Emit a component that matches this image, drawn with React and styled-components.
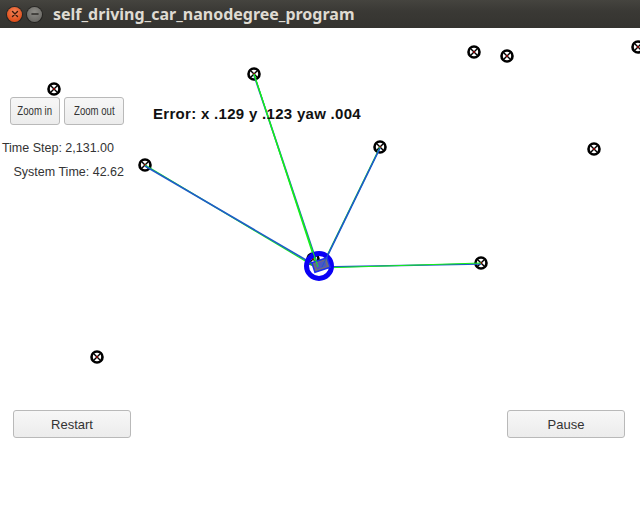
import React from 'react'
import styled, { createGlobalStyle } from 'styled-components'

const GlobalStyle = createGlobalStyle`
  html, body {
    margin: 0;
    padding: 0;
    background: #ffffff;
  }
  body {
    font-family: 'Liberation Sans', Arial, sans-serif;
  }
`

const Window = styled.div`
  width: 640px;
  height: 508px;
  display: flex;
  flex-direction: column;
  overflow: hidden;
`

const TitleBar = styled.div`
  height: 28px;
  flex: none;
  display: flex;
  align-items: center;
  padding-left: 7px;
  gap: 5px;
  background: linear-gradient(#45443f, #3a3935 40%, #34332f);
  box-sizing: border-box;
`

const WinButton = styled.span`
  width: 15px;
  height: 15px;
  border-radius: 50%;
  display: flex;
  align-items: center;
  justify-content: center;
  background: ${p => (p.$close
    ? 'radial-gradient(circle at 50% 35%, #f5855a, #e0501c 70%, #c9420f)'
    : 'radial-gradient(circle at 50% 35%, #8d8c87, #6d6c68 70%, #5c5b57)')};
  box-shadow: 0 0 0 1px rgba(0, 0, 0, 0.35);
  svg {
    display: block;
  }
`

const Title = styled.span`
  margin-left: 6px;
  color: #dfdbd2;
  font-family: 'Noto Sans', 'DejaVu Sans', sans-serif;
  font-weight: 700;
  font-size: 16px;
`

const Stage = styled.div`
  position: relative;
  flex: 1;
  background: #ffffff;
`

const Scene = styled.svg`
  position: absolute;
  inset: 0;
  width: 640px;
  height: 480px;
`

const Overlay = styled.div`
  position: absolute;
  inset: 0;
  display: flex;
  flex-direction: column;
  justify-content: space-between;
  padding: 69px 15px 70px 0;
  box-sizing: border-box;
  pointer-events: none;
  > * {
    pointer-events: auto;
  }
`

const TopRow = styled.div`
  display: flex;
  align-items: flex-start;
`

const LeftColumn = styled.div`
  width: 124px;
  display: flex;
  flex-direction: column;
  align-items: flex-end;
`

const ZoomRow = styled.div`
  display: flex;
  gap: 4px;
  margin-bottom: 11px;
`

const Button = styled.button`
  width: ${p => p.$w}px;
  height: ${p => p.$h}px;
  padding: 0;
  border: 1px solid #b9b9b9;
  border-radius: 3px;
  background: linear-gradient(#f7f7f7, #ececec);
  color: #333333;
  font-family: 'Liberation Sans', Arial, sans-serif;
  font-size: ${p => p.$fs}px;
  cursor: pointer;
`

const ZoomLabel = styled.span`
  display: inline-block;
  transform: scaleX(0.8);
`

const InfoLine = styled.div`
  font-size: 12.5px;
  line-height: 24px;
  color: #333333;
  white-space: nowrap;
  margin-right: ${p => p.$shift || 0}px;
`

const ErrorText = styled.div`
  margin: 8px 0 0 29px;
  font-size: 15px;
  line-height: 18px;
  font-weight: 700;
  letter-spacing: 0.3px;
  color: #111111;
  white-space: nowrap;
`

const BottomRow = styled.div`
  display: flex;
  justify-content: space-between;
  padding-left: 13px;
`

const landmarks = [
  [54, 61], [254, 46], [474, 24], [507, 28], [638, 19],
  [145, 137], [380, 119], [594, 121], [481, 235], [97, 329], [313, 231],
]

// green = observation, blue = associated landmark; blueTop marks which one is drawn last
const observed = [
  { to: [145, 137], from: [318, 239], blueTop: true },
  { to: [254, 46], from: [318, 238], blueTop: false },
  { to: [380, 119], from: [322, 239], blueTop: true },
  { to: [481, 235], from: [322, 239], blueTop: false },
]

const Landmark = ({ x, y }) => (
  <g>
    <circle cx={x} cy={y} r="5.5" fill="#ffffff" stroke="#000000" strokeWidth="2.6" />
    <line x1={x - 3} y1={y - 3} x2={x + 3} y2={y + 3} stroke="#000000" strokeWidth="1.4" />
    <line x1={x - 3} y1={y + 3} x2={x + 3} y2={y - 3} stroke="#000000" strokeWidth="1.4" />
    <rect x={x - 0.7} y={y - 0.7} width="1.4" height="1.4" fill="#ff0000" />
  </g>
)

const Ray = ({ to, from, blueTop }) => {
  const blue = <line x1={from[0]} y1={from[1]} x2={to[0]} y2={to[1] + 1} stroke="#1e5cc8" strokeWidth="1.7" />
  const green = <line x1={from[0] - 1} y1={from[1] + 1} x2={to[0]} y2={to[1]} stroke="#16f016" strokeWidth="1.2" />
  return blueTop ? <g>{green}{blue}</g> : <g>{blue}{green}</g>
}

const App = () => {
  return (
    <Window>
      <GlobalStyle />
      <TitleBar>
        <WinButton $close>
          <svg width="8" height="8" viewBox="0 0 8 8">
            <path d="M1.5 1.5 L6.5 6.5 M6.5 1.5 L1.5 6.5" stroke="#3a1a0c" strokeWidth="1.4" strokeLinecap="round" />
          </svg>
        </WinButton>
        <WinButton>
          <svg width="8" height="8" viewBox="0 0 8 8">
            <path d="M1 4 L7 4" stroke="#2e2d2a" strokeWidth="1.6" strokeLinecap="round" />
          </svg>
        </WinButton>
        <Title>self_driving_car_nanodegree_program</Title>
      </TitleBar>
      <Stage>
        <Scene viewBox="0 0 640 480">
          {landmarks.map(([x, y], i) => (
            <Landmark key={i} x={x} y={y} />
          ))}
          {observed.map((r, i) => (
            <Ray key={i} {...r} />
          ))}
          <circle cx="319" cy="238" r="12.5" fill="none" stroke="#0a00f5" strokeWidth="5" />
          <g transform="rotate(-18 321 237)">
            <rect x="313" y="232" width="16" height="10" fill="#6e6e7a" stroke="#1a2cf0" strokeWidth="1.5" />
            <rect x="316" y="234" width="10" height="6" fill="#4d56c4" />
          </g>
          <line x1="318" y1="239" x2="254" y2="46" stroke="#16f016" strokeWidth="1" />
          <line x1="322" y1="239" x2="380" y2="120" stroke="#1e5cc8" strokeWidth="1" />
        </Scene>
        <Overlay>
          <TopRow>
            <LeftColumn>
              <ZoomRow>
                <Button $w={50} $h={28} $fs={12}><ZoomLabel>Zoom in</ZoomLabel></Button>
                <Button $w={60} $h={28} $fs={12}><ZoomLabel>Zoom out</ZoomLabel></Button>
              </ZoomRow>
              <InfoLine $shift={10}>Time Step: 2,131.00</InfoLine>
              <InfoLine>System Time: 42.62</InfoLine>
            </LeftColumn>
            <ErrorText>Error: x .129 y .123 yaw .004</ErrorText>
          </TopRow>
          <BottomRow>
            <Button $w={118} $h={28} $fs={13}>Restart</Button>
            <Button $w={118} $h={28} $fs={13}>Pause</Button>
          </BottomRow>
        </Overlay>
      </Stage>
    </Window>
  )
}

export default App
